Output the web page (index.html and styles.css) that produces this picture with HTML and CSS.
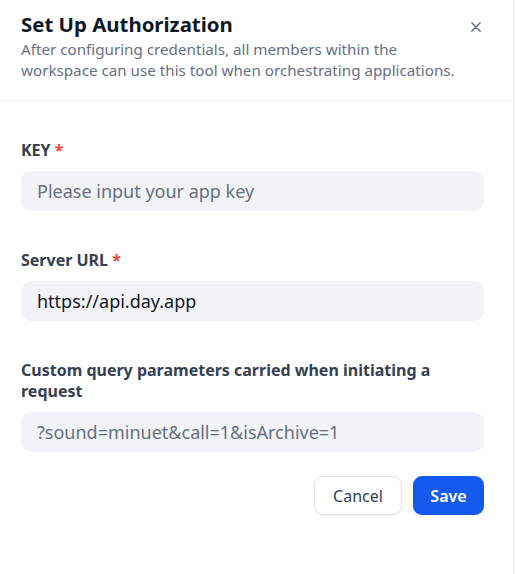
FILE: index.html
```html
<!DOCTYPE html>
<html lang="en">
<head>
<meta charset="utf-8">
<title>Set Up Authorization</title>
<link rel="stylesheet" href="styles.css">
</head>
<body>
<div class="panel">
  <header class="header">
    <div class="header-text">
      <h1 class="title">Set Up Authorization</h1>
      <p class="desc">After configuring credentials, all members within the workspace can use this tool when orchestrating applications.</p>
    </div>
    <button class="close" aria-label="Close">
      <svg width="10" height="10" viewBox="0 0 10 10" fill="none"><path d="M0.8 0.8L9.2 9.2M9.2 0.8L0.8 9.2" stroke="#676f83" stroke-width="1.5" stroke-linecap="round"/></svg>
    </button>
  </header>
  <form class="form">
    <div class="field">
      <label class="label">KEY <span class="req">*</span></label>
      <div class="input placeholder">Please input your app key</div>
    </div>
    <div class="field">
      <label class="label">Server URL <span class="req">*</span></label>
      <div class="input">https://api.day.app</div>
    </div>
    <div class="field last">
      <label class="label">Custom query parameters carried when initiating a request</label>
      <div class="input placeholder">?sound=minuet&amp;call=1&amp;isArchive=1</div>
    </div>
    <div class="actions">
      <button type="button" class="btn btn-cancel">Cancel</button>
      <button type="button" class="btn btn-save">Save</button>
    </div>
  </form>
</div>
</body>
</html>
```
FILE: styles.css
```css
* { box-sizing: border-box; }
html, body { margin: 0; padding: 0; background: #fff; }
body {
  font-family: "Noto Sans", "Open Sans", sans-serif;
  color: #101828;
}
.panel {
  width: 514px;
  min-height: 574px;
  border-right: 1px solid #eaecf0;
}
.header {
  display: flex;
  justify-content: space-between;
  align-items: flex-start;
  padding: 9px 34px 19px 21px;
  border-bottom: 1px solid #f0f1f3;
}
.title {
  margin: 0;
  font-size: 20.4px;
  line-height: 30px;
  font-weight: 700;
  color: #101828;
}
.desc {
  margin: 0;
  width: 450px;
  font-size: 15.2px;
  line-height: 21px;
  color: #676f83;
}
.close {
  border: 0;
  background: none;
  padding: 0;
  margin-top: 13px;
  width: 10px;
  height: 10px;
  display: flex;
}
.form {
  padding: 39px 29px 0 21px;
  display: flex;
  flex-direction: column;
}
.field { margin-bottom: 39px; display: flex; flex-direction: column; }
.field.last { margin-bottom: 0; }
.label {
  font-size: 16px;
  line-height: 21px;
  font-weight: 700;
  color: #354052;
  margin-bottom: 10px;
}
.req { color: #f04438; }
.input {
  height: 40px;
  border-radius: 10px;
  background: #f2f3f7;
  padding: 0 16px;
  display: flex;
  align-items: center;
  font-size: 18px;
  color: #101828;
}
.input.placeholder { color: #676f83; }
.actions {
  display: flex;
  justify-content: flex-end;
  gap: 11px;
  margin-top: 24px;
}
.btn {
  height: 39px;
  border-radius: 9px;
  font-family: inherit;
  font-size: 16px;
  padding: 0 12px;
}
.btn-cancel {
  width: 88px;
  background: #fff;
  border: 1px solid #e0e2e7;
  color: #354052;
  box-shadow: 0 1px 2px rgba(16,24,40,0.05);
}
.btn-save {
  width: 71px;
  background: #155aef;
  border: 0;
  color: #fff;
  font-weight: 600;
}
```
